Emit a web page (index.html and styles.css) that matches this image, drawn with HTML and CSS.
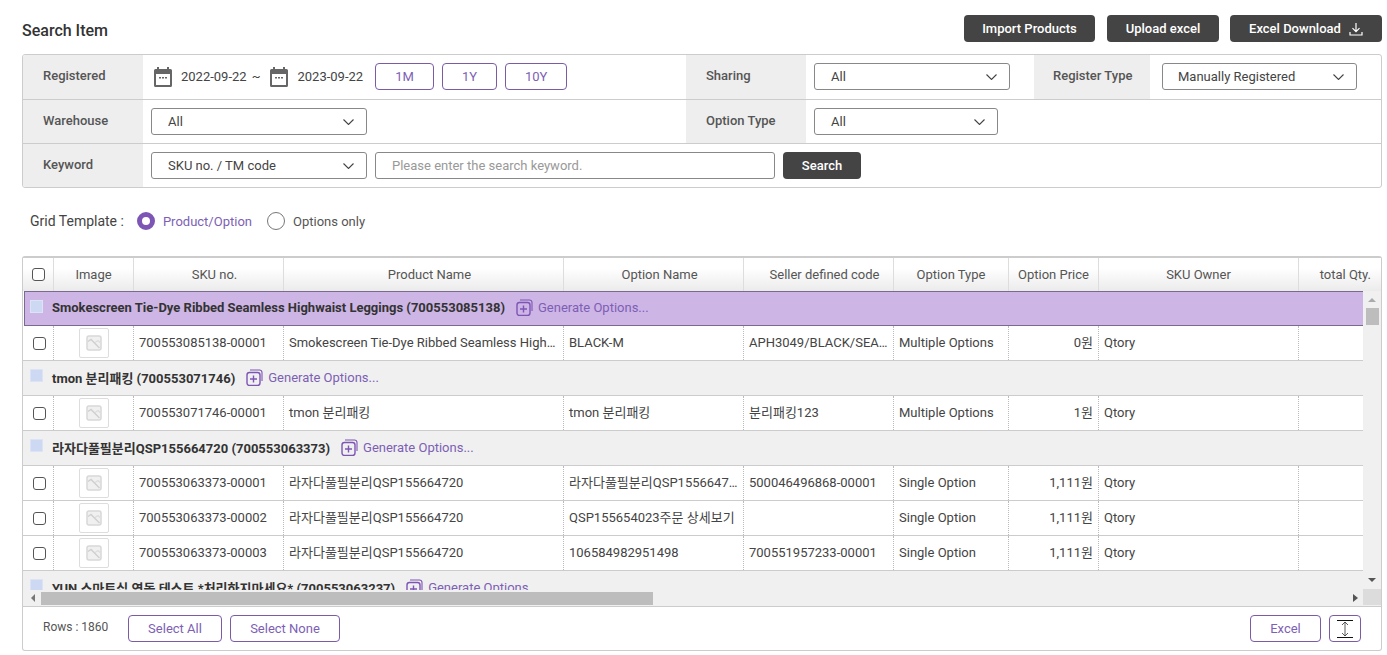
FILE: index.html
```html
<!DOCTYPE html>
<html lang="en">
<head>
    <meta charset="UTF-8">
    <meta name="viewport" content="width=device-width, initial-scale=1.0">
    <title>Search Item</title>
    <link rel="stylesheet" href="styles.css">
</head>
<body>
    <svg class="defs" width="0" height="0">
        <symbol id="chev" viewBox="0 0 11 6"><path d="M.5 .5l5 5 5-5" fill="none" stroke="#444" stroke-width="1.1"/></symbol>
        <symbol id="cal" viewBox="0 0 18 20">
            <path d="M3 0h2v2h8V0h2v2h1.5A1.5 1.5 0 0 1 18 3.500v15a1.500 1.500 0 0 1-1.500 1.500h-15A1.500 1.500 0 0 1 0 18.500v-15A1.500 1.500 0 0 1 1.500 2H3zM2 7v11h14V7z" fill="#666"/>
            <path d="M5 10h2v1.500H5zM8 10h2v1.500H8zM11 10h2v1.500h-2z" fill="#666"/>
        </symbol>
        <symbol id="noimg" viewBox="0 0 16 16">
            <rect x="1" y="1" width="14" height="14" rx="2" fill="#f0f0f0" stroke="#d8d8d8" stroke-width="1.500"/>
            <path d="M2 6.500l3-2 8.500 8.500" fill="none" stroke="#d0d0d0" stroke-width="1.500"/>
            <path d="M9 7.500l3-2 2 2" fill="none" stroke="#dcdcdc" stroke-width="1.300"/>
        </symbol>
        <symbol id="gen" viewBox="0 0 17 17">
            <path d="M4 1h9.500A2.500 2.500 0 0 1 16 3.500V12" fill="none" stroke="#7d55b5" stroke-width="1.100"/>
            <rect x="1" y="3.500" width="13" height="13" rx="2.500" fill="none" stroke="#7d55b5" stroke-width="1.400"/>
            <path d="M7.500 6.500v7M4 10h7" stroke="#7d55b5" stroke-width="1.400"/>
        </symbol>
    </svg>

    <div class="topbar">
        <h1>Search Item</h1>
        <div class="topbtns">
            <button class="btn-dark btn-import">Import Products</button>
            <button class="btn-dark btn-upload">Upload excel</button>
            <button class="btn-dark btn-down">Excel Download
                <svg width="14" height="14" viewBox="0 0 14 14"><path d="M7 1v8.500M3.500 6.200L7 9.700l3.500-3.500M1 10v3h12v-3" fill="none" stroke="#fff" stroke-width="1.200"/></svg>
            </button>
        </div>
    </div>

    <div class="filter">
        <div class="frow frow-1">
            <div class="flabel">Registered</div>
            <div class="fmain">
                <svg class="calicon" width="18" height="20"><use href="#cal"/></svg>
                <span class="datetxt">2022-09-22</span>
                <span class="tilde">~</span>
                <svg class="calicon" width="18" height="20"><use href="#cal"/></svg>
                <span class="datetxt">2023-09-22</span>
                <button class="btn-line btn-1m">1M</button>
                <button class="btn-line btn-1y">1Y</button>
                <button class="btn-line btn-10y">10Y</button>
            </div>
            <div class="flabel">Sharing</div>
            <div class="fside">
                <div class="select sel-sharing">All<svg width="11" height="6"><use href="#chev"/></svg></div>
            </div>
            <div class="flabel flabel-reg">Register Type</div>
            <div class="fside">
                <div class="select sel-reg">Manually Registered<svg width="11" height="6"><use href="#chev"/></svg></div>
            </div>
        </div>
        <div class="frow frow-2">
            <div class="flabel">Warehouse</div>
            <div class="fmain">
                <div class="select sel-wide">All<svg width="11" height="6"><use href="#chev"/></svg></div>
            </div>
            <div class="flabel">Option Type</div>
            <div class="fside">
                <div class="select sel-opt">All<svg width="11" height="6"><use href="#chev"/></svg></div>
            </div>
        </div>
        <div class="frow frow-last">
            <div class="flabel">Keyword</div>
            <div class="fmain fmain-key">
                <div class="select sel-wide">SKU no. / TM code<svg width="11" height="6"><use href="#chev"/></svg></div>
                <input class="keyword" type="text" placeholder="Please enter the search keyword.">
                <button class="btn-dark btn-search">Search</button>
            </div>
        </div>
    </div>

    <div class="template">
        <span class="template-title">Grid Template :</span>
        <span class="radio radio-on"></span>
        <span class="radio-txt radio-txt-on">Product/Option</span>
        <span class="radio"></span>
        <span class="radio-txt">Options only</span>
    </div>

    <div class="grid">
        <div class="ghead">
            <div class="hcell"><span class="check"></span></div>
            <div class="hcell">Image</div>
            <div class="hcell hcell-sort">SKU no.</div>
            <div class="hcell hcell-sort">Product Name</div>
            <div class="hcell hcell-sort">Option Name</div>
            <div class="hcell hcell-sort">Seller defined code</div>
            <div class="hcell">Option Type</div>
            <div class="hcell">Option Price</div>
            <div class="hcell">SKU Owner</div>
            <div class="hcell hcell-last">total Qty.</div>
        </div>
        <div class="gbody">
            <div class="gmain">
                <div class="viewport">
                    <div class="group group-sel">
                        <span class="gcheck"></span>
                        <b>Smokescreen Tie-Dye Ribbed Seamless Highwaist Leggings (700553085138)</b>
                        <svg class="genicon" width="17" height="17"><use href="#gen"/></svg>
                        <span class="gentxt">Generate Options...</span>
                    </div>
                    <div class="row">
                        <div class="cell cell-c"><span class="check"></span></div>
                        <div class="cell cell-c"><span class="thumb"><svg width="16" height="16"><use href="#noimg"/></svg></span></div>
                        <div class="cell">700553085138-00001</div>
                        <div class="cell">Smokescreen Tie-Dye Ribbed Seamless High…</div>
                        <div class="cell">BLACK-M</div>
                        <div class="cell">APH3049/BLACK/SEA…</div>
                        <div class="cell">Multiple Options</div>
                        <div class="cell cell-r">0원</div>
                        <div class="cell">Qtory</div>
                        <div class="cell"></div>
                    </div>
                    <div class="group">
                        <span class="gcheck"></span>
                        <b>tmon 분리패킹 (700553071746)</b>
                        <svg class="genicon" width="17" height="17"><use href="#gen"/></svg>
                        <span class="gentxt">Generate Options...</span>
                    </div>
                    <div class="row">
                        <div class="cell cell-c"><span class="check"></span></div>
                        <div class="cell cell-c"><span class="thumb"><svg width="16" height="16"><use href="#noimg"/></svg></span></div>
                        <div class="cell">700553071746-00001</div>
                        <div class="cell">tmon 분리패킹</div>
                        <div class="cell">tmon 분리패킹</div>
                        <div class="cell">분리패킹123</div>
                        <div class="cell">Multiple Options</div>
                        <div class="cell cell-r">1원</div>
                        <div class="cell">Qtory</div>
                        <div class="cell"></div>
                    </div>
                    <div class="group">
                        <span class="gcheck"></span>
                        <b>라자다풀필분리QSP155664720 (700553063373)</b>
                        <svg class="genicon" width="17" height="17"><use href="#gen"/></svg>
                        <span class="gentxt">Generate Options...</span>
                    </div>
                    <div class="row">
                        <div class="cell cell-c"><span class="check"></span></div>
                        <div class="cell cell-c"><span class="thumb"><svg width="16" height="16"><use href="#noimg"/></svg></span></div>
                        <div class="cell">700553063373-00001</div>
                        <div class="cell">라자다풀필분리QSP155664720</div>
                        <div class="cell">라자다풀필분리QSP1556647…</div>
                        <div class="cell">500046496868-00001</div>
                        <div class="cell">Single Option</div>
                        <div class="cell cell-r">1,111원</div>
                        <div class="cell">Qtory</div>
                        <div class="cell"></div>
                    </div>
                    <div class="row">
                        <div class="cell cell-c"><span class="check"></span></div>
                        <div class="cell cell-c"><span class="thumb"><svg width="16" height="16"><use href="#noimg"/></svg></span></div>
                        <div class="cell">700553063373-00002</div>
                        <div class="cell">라자다풀필분리QSP155664720</div>
                        <div class="cell">QSP155654023주문 상세보기</div>
                        <div class="cell"></div>
                        <div class="cell">Single Option</div>
                        <div class="cell cell-r">1,111원</div>
                        <div class="cell">Qtory</div>
                        <div class="cell"></div>
                    </div>
                    <div class="row">
                        <div class="cell cell-c"><span class="check"></span></div>
                        <div class="cell cell-c"><span class="thumb"><svg width="16" height="16"><use href="#noimg"/></svg></span></div>
                        <div class="cell">700553063373-00003</div>
                        <div class="cell">라자다풀필분리QSP155664720</div>
                        <div class="cell">106584982951498</div>
                        <div class="cell">700551957233-00001</div>
                        <div class="cell">Single Option</div>
                        <div class="cell cell-r">1,111원</div>
                        <div class="cell">Qtory</div>
                        <div class="cell"></div>
                    </div>
                    <div class="group">
                        <span class="gcheck"></span>
                        <b>YUN 스마트십 연동 테스트 *처리하지마세요* (700553063237)</b>
                        <svg class="genicon" width="17" height="17"><use href="#gen"/></svg>
                        <span class="gentxt">Generate Options...</span>
                    </div>
                </div>
                <div class="hscroll">
                    <span class="arrow-left"></span>
                    <span class="hthumb"></span>
                    <span class="arrow-right"></span>
                </div>
            </div>
            <div class="vscroll">
                <span class="arrow-up"></span>
                <span class="vthumb"></span>
                <span class="arrow-down"></span>
                <span class="corner"></span>
            </div>
        </div>
        <div class="gfoot">
            <span class="rows">Rows : 1860</span>
            <button class="btn-line btn-all">Select All</button>
            <button class="btn-line btn-none">Select None</button>
            <button class="btn-line btn-excel">Excel</button>
            <button class="btn-line btn-expand">
                <svg width="20" height="20" viewBox="0 0 20 20"><path d="M2 1.500h16M2 18.500h16" stroke="#111" stroke-width="1.200"/><path d="M10 3v14M7 6l3-3 3 3M7 14l3 3 3-3" fill="none" stroke="#333" stroke-width=".8"/></svg>
            </button>
        </div>
    </div>
</body>
</html>
```

FILE: styles.css
```css
*{
    box-sizing: border-box;
}

body{
    margin: 0;
    padding: 15px 5px 0 22px;
    font-family: Roboto, "Noto Sans CJK KR", sans-serif;
    font-size: 13px;
    color: #444;
    background-color: white;
}

.defs{
    display: block;
    height: 0;
}

button{
    font-family: inherit;
    cursor: pointer;
}

/* top bar */
.topbar{
    display: flex;
    justify-content: space-between;
    align-items: center;
    height: 27px;
}

h1{
    margin: 3px 0 0;
    font-size: 16px;
    font-weight: 500;
    color: #333;
}

.topbtns{
    display: flex;
}

.btn-dark{
    height: 27px;
    padding: 0;
    border: none;
    border-radius: 4px;
    background-color: #444;
    color: white;
    font-size: 13px;
    font-weight: 500;
}

.btn-import{
    width: 131px;
    margin-right: 12px;
}

.btn-upload{
    width: 112px;
    margin-right: 11px;
}

.btn-down{
    width: 152px;
    display: flex;
    align-items: center;
    justify-content: center;
    gap: 8px;
}

/* filter panel */
.filter{
    margin-top: 12px;
    height: 134px;
    border: 1px solid #ccc;
    border-radius: 3px;
    overflow: hidden;
}

.frow{
    display: flex;
    height: 44px;
    border-bottom: 1px solid #ccc;
}

.frow-1{
    height: 45px;
}

.frow-1 .fmain, .frow-1 .fside, .frow-last .fmain{
    padding-bottom: 1px;
}

.frow-last{
    border-bottom: none;
}

.flabel{
    flex: 0 0 120px;
    padding: 0 0 4px 20px;
    display: flex;
    align-items: center;
    background-color: #eee;
    font-size: 13px;
    font-weight: 500;
    color: #555;
}

.frow-2 .flabel{
    padding-bottom: 2px;
}

.flabel-reg{
    flex-basis: 116px;
    padding-left: 19px;
    margin-left: 24px;
}

.fmain{
    flex: 0 0 543px;
    display: flex;
    align-items: center;
    padding-left: 8px;
}

.fmain-key{
    flex: 1;
}

.fside{
    display: flex;
    align-items: center;
    padding-left: 8px;
}

.calicon{
    margin-left: 3px;
    margin-right: 9px;
}

.datetxt{
    color: #444;
}

.tilde{
    margin: 0 7px 0 5px;
}

.btn-line{
    height: 27px;
    padding: 0;
    border: 1px solid #7c5ba6;
    border-radius: 4px;
    background-color: white;
    color: #7d5fb5;
    font-size: 13px;
}

.btn-1m{
    width: 59px;
    margin-left: 12px;
}

.btn-1y{
    width: 55px;
    margin-left: 8px;
}

.btn-10y{
    width: 62px;
    margin-left: 8px;
}

.select{
    height: 27px;
    padding: 0 12px 0 16px;
    display: flex;
    align-items: center;
    justify-content: space-between;
    border: 1px solid #888;
    border-radius: 3px;
    background-color: white;
    color: #444;
}

.sel-wide{
    width: 216px;
}

.sel-sharing{
    width: 196px;
}

.sel-opt{
    width: 184px;
}

.sel-reg{
    width: 195px;
    margin-left: 4px;
    padding-left: 15px;
}

.keyword{
    width: 400px;
    height: 27px;
    margin-left: 8px;
    padding: 0 16px;
    border: 1px solid #888;
    border-radius: 3px;
    outline: none;
    font-family: inherit;
    font-size: 13px;
}

.keyword::placeholder{
    color: #999;
}

.btn-search{
    width: 78px;
    margin-left: 8px;
}

/* grid template radios */
.template{
    height: 68px;
    display: flex;
    align-items: center;
    padding: 0 0 2px 8px;
}

.template-title{
    font-size: 14px;
    margin-right: 13px;
    color: #444;
}

.radio{
    width: 18px;
    height: 18px;
    border: 1px solid #777;
    border-radius: 50%;
    background-color: white;
}

.radio-on{
    border: 5px solid #7d55b5;
}

.radio-txt{
    margin: 0 15px 0 8px;
    color: #555;
}

.radio-txt-on{
    color: #7d5fb5;
}

/* grid */
.grid{
    height: 395px;
    border: 1px solid #ccc;
    border-top: 2px solid #ccc;
    border-radius: 3px;
}

.ghead, .row{
    display: grid;
    grid-template-columns: 31px 80px 150px 280px 180px 150px 115px 90px 200px 1fr;
}

.ghead{
    height: 33px;
    background: linear-gradient(#fff 30%, #ebebeb);
}

.hcell{
    display: flex;
    align-items: center;
    justify-content: center;
    border-right: 1px solid #ddd;
    color: #555;
}

.hcell-sort{
    padding-left: 12px;
}

.hcell-last{
    justify-content: flex-end;
    padding-right: 10px;
    border-right: none;
}

.check{
    width: 13px;
    height: 13px;
    border: 1px solid #555;
    border-radius: 3px;
    background-color: white;
}

.row .check{
    margin-left: 2px;
}

.gbody{
    display: flex;
    height: 316px;
    border-bottom: 1px solid #ccc;
}

.gmain{
    flex: 0 0 1340px;
    width: 1340px;
}

.viewport{
    height: 299px;
    overflow: hidden;
}

.group{
    height: 35px;
    display: flex;
    align-items: center;
    padding: 0 0 2px 7px;
    border-bottom: 1px solid #ccc;
    background-color: #f0f0f0;
    color: #333;
}

.group-sel{
    margin-left: 1px;
    border: 1px solid #7b6a90;
    border-right: none;
    padding-left: 5px;
    background-color: #cdb5e5;
}

.gcheck{
    width: 13px;
    height: 13px;
    margin: -3px 9px 0 0;
    border: 1px solid #dbe3f5;
    background-color: #cdd8f2;
}

.group b{
    font-weight: 700;
    white-space: nowrap;
}

.genicon{
    margin-left: 11px;
    flex-shrink: 0;
}

.gentxt{
    margin-left: 5px;
    color: #7d5fb5;
    white-space: nowrap;
}

.row{
    height: 35px;
    border-bottom: 1px solid #ccc;
    background-color: white;
}

.cell{
    padding: 0 5px;
    line-height: 34px;
    border-right: 1px dotted #bbb;
    white-space: nowrap;
    overflow: hidden;
    text-overflow: ellipsis;
    color: #444;
}

.row .cell:last-child{
    border-right: none;
}

.cell-c{
    display: flex;
    align-items: center;
    justify-content: center;
    padding: 0;
}

.cell-r{
    text-align: right;
}

.thumb{
    width: 30px;
    height: 30px;
    display: flex;
    align-items: center;
    justify-content: center;
    border: 1px solid #ddd;
    border-radius: 2px;
    background-color: white;
}

/* fake scrollbars */
.hscroll{
    height: 16px;
    display: flex;
    align-items: center;
    background-color: #f0f0f0;
}

.hthumb{
    width: 612px;
    height: 13px;
    margin-left: 6px;
    background-color: #bdbdbd;
}

.arrow-left{
    margin-left: 8px;
    border: 4px solid transparent;
    border-left: none;
    border-right: 4px solid #777;
}

.arrow-right{
    margin-left: 700px;
    border: 4px solid transparent;
    border-right: none;
    border-left: 5px solid #555;
}

.vscroll{
    flex: 1;
    display: flex;
    flex-direction: column;
    align-items: center;
    background-color: #f0f0f0;
}

.arrow-up{
    margin-top: 7px;
    border: 4px solid transparent;
    border-top: none;
    border-bottom: 4px solid #aaa;
}

.vthumb{
    width: 13px;
    height: 17px;
    margin-top: 6px;
    background-color: #bdbdbd;
}

.arrow-down{
    margin-top: 253px;
    border: 4px solid transparent;
    border-bottom: none;
    border-top: 4px solid #555;
}

.corner{
    width: 100%;
    height: 16px;
    margin-top: 7px;
    background-color: #dcdcdc;
}

.gfoot{
    height: 43px;
    display: flex;
    align-items: center;
    padding: 0 20px;
}

.rows{
    width: 85px;
    font-size: 12px;
    margin-top: -3px;
    color: #555;
}

.btn-all{
    width: 94px;
}

.btn-none{
    width: 110px;
    margin-left: 8px;
}

.btn-excel{
    width: 71px;
    margin-left: auto;
}

.btn-expand{
    width: 32px;
    margin-left: 8px;
    display: flex;
    align-items: center;
    justify-content: center;
}
```
